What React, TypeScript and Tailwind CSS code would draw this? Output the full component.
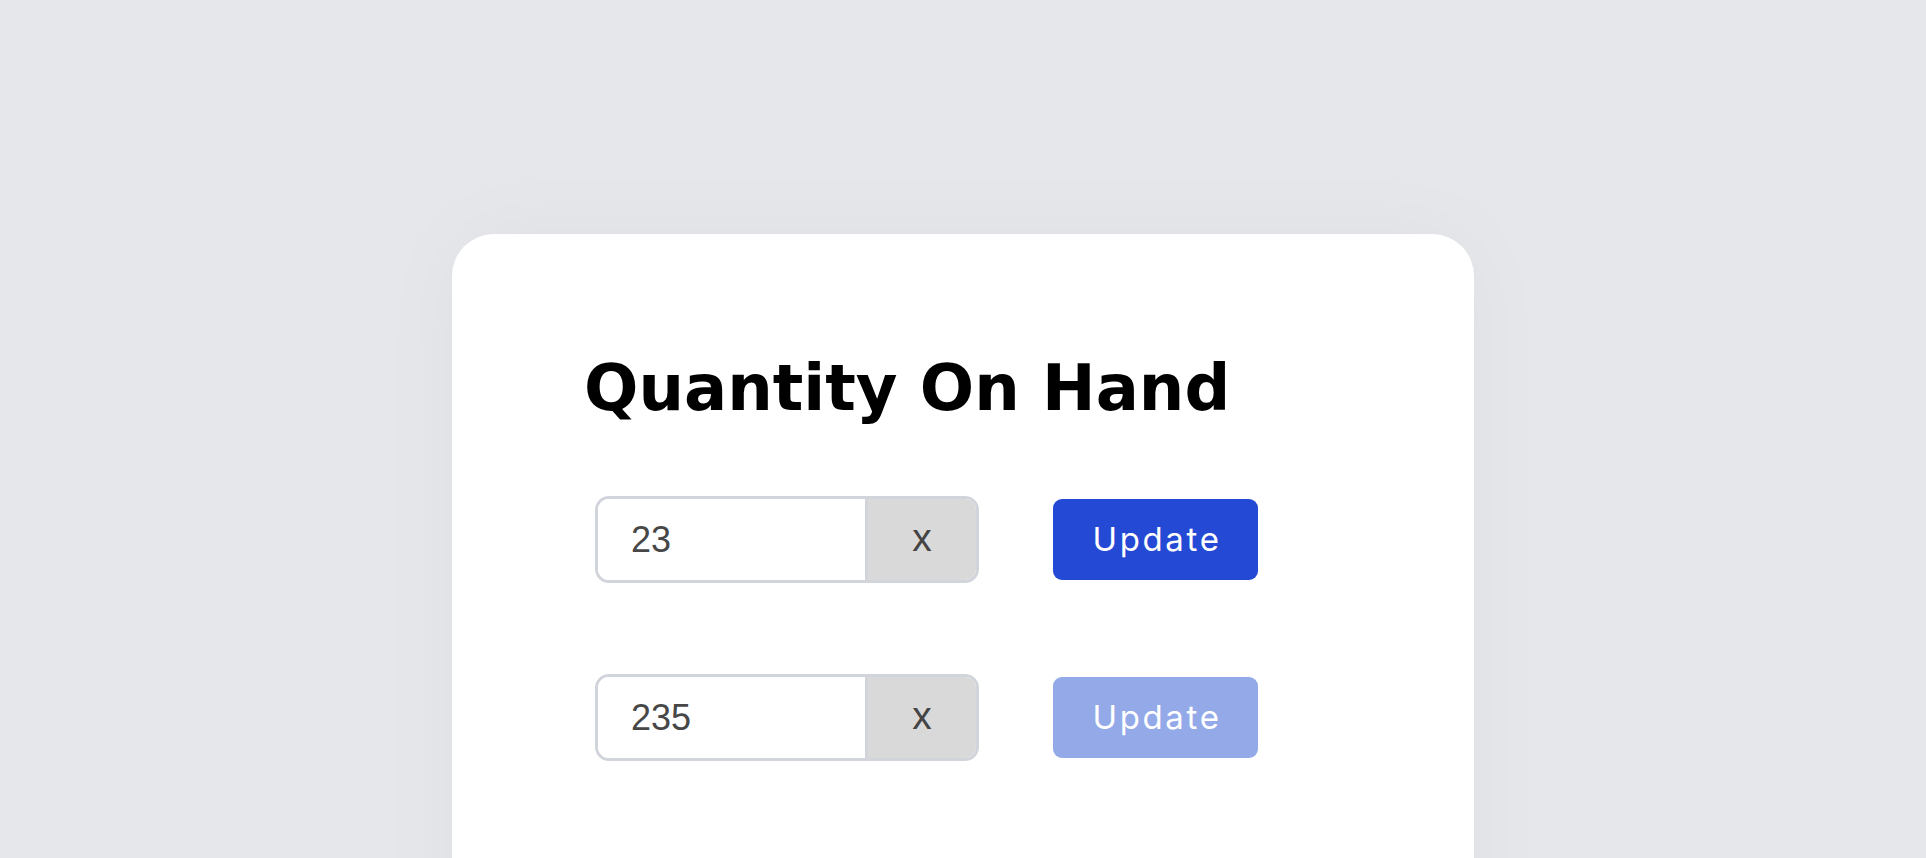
import React from "react";

function Row({ value, disabled }: { value: string; disabled?: boolean }) {
  return (
    <div className="flex items-center">
      <div className="flex h-[87px] w-[384px] overflow-hidden rounded-[14px] border-[3px] border-[#d1d5db]">
        <div
          className="flex flex-1 items-center bg-white pl-[33px] text-[36px] text-[#474747]"
          style={{ fontFamily: '"Liberation Sans", Arial, sans-serif' }}
        >
          {value}
        </div>
        <div
          className="flex w-[111px] items-center justify-center border-l-[3px] border-[#d1d5db] bg-[#d9d9d9] pb-[2px] text-[39px] text-[#444444]"
          style={{ fontFamily: '"Liberation Sans", Arial, sans-serif' }}
        >
          x
        </div>
      </div>
      <button
        className={
          "ml-[74px] flex h-[81px] w-[205px] items-center justify-center rounded-[9px] pl-[3px] text-[33px] tracking-[0.08em] text-white " +
          (disabled ? "bg-[#93a9e8]" : "bg-[#2449d4]")
        }
        style={{ fontFamily: 'Inter, "Noto Sans", sans-serif' }}
      >
        Update
      </button>
    </div>
  );
}

export default function App() {
  return (
    <div className="h-[858px] w-full overflow-hidden bg-[#e5e7eb] pt-[234px]">
      <div className="mx-auto h-[800px] w-[1022px] rounded-[42px] bg-white pl-[132px] pt-[122px] shadow-[0_0_90px_rgba(0,0,0,0.035)]">
        <h1
          className="text-[64px] font-bold leading-[64px] text-black"
          style={{ fontFamily: '"DejaVu Sans", Inter, sans-serif' }}
        >
          Quantity On Hand
        </h1>
        <div className="ml-[11px] mt-[76px] flex flex-col gap-[91px]">
          <Row value="23" />
          <Row value="235" disabled />
        </div>
      </div>
    </div>
  );
}
